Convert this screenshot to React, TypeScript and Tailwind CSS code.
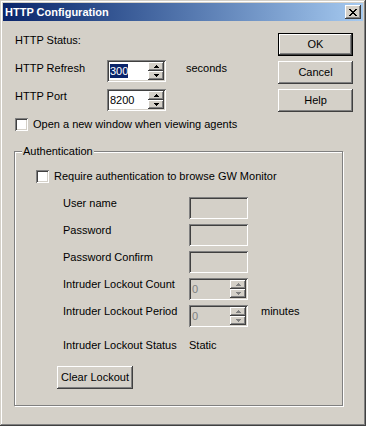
const raised =
  "shadow-[inset_-1px_-1px_0_#404040,inset_1px_1px_0_#ffffff,inset_-2px_-2px_0_#808080,inset_2px_2px_0_#d4d0c8]";
const sunken =
  "shadow-[inset_1px_1px_0_#808080,inset_-1px_-1px_0_#ffffff,inset_2px_2px_0_#404040,inset_-2px_-2px_0_#d4d0c8]";

function Arrow({ up, disabled }: { up?: boolean; disabled?: boolean }) {
  const c = disabled ? "#808080" : "#000000";
  return (
    <svg width="5" height="3" viewBox="0 0 5 3" shapeRendering="crispEdges">
      {up ? (
        <>
          <rect x="2" y="0" width="1" height="1" fill={c} />
          <rect x="1" y="1" width="3" height="1" fill={c} />
          <rect x="0" y="2" width="5" height="1" fill={c} />
        </>
      ) : (
        <>
          <rect x="0" y="0" width="5" height="1" fill={c} />
          <rect x="1" y="1" width="3" height="1" fill={c} />
          <rect x="2" y="2" width="1" height="1" fill={c} />
        </>
      )}
    </svg>
  );
}

function SpinBox({
  value,
  selected,
  disabled,
}: {
  value: string;
  selected?: boolean;
  disabled?: boolean;
}) {
  return (
    <div className={`flex h-[22px] w-[59px] p-[2px] ${sunken} ${disabled ? "bg-[#d4d0c8]" : "bg-white"}`}>
      <div className="flex-1 flex items-center pl-[1px]">
        {selected ? (
          <span className="bg-[#0a246a] text-white leading-[14px]">{value}</span>
        ) : (
          <span className={disabled ? "text-[#808080]" : "text-black"}>{value}</span>
        )}
      </div>
      <div className="flex flex-col w-[16px]">
        <div className={`h-[9px] bg-[#d4d0c8] flex items-center justify-center ${raised}`}>
          <Arrow up disabled={disabled} />
        </div>
        <div className={`h-[9px] bg-[#d4d0c8] flex items-center justify-center ${raised}`}>
          <Arrow disabled={disabled} />
        </div>
      </div>
    </div>
  );
}

function CheckBox() {
  return <div className={`w-[13px] h-[13px] bg-white shrink-0 ${sunken}`} />;
}

function Button({ label, isDefault, width = "w-[75px]" }: { label: string; isDefault?: boolean; width?: string }) {
  if (isDefault) {
    return (
      <div className={`${width} h-[23px] border border-black`}>
        <div className={`w-full h-full flex items-center justify-center ${raised}`}>{label}</div>
      </div>
    );
  }
  return <div className={`${width} h-[23px] flex items-center justify-center ${raised}`}>{label}</div>;
}

function FieldRow({ label, children, suffix }: { label: string; children: React.ReactNode; suffix?: string }) {
  return (
    <div className="flex items-start h-[22px]">
      <span className="w-[126px] leading-[13px]">{label}</span>
      {children}
      {suffix && <span className="ml-[13px] leading-[13px]">{suffix}</span>}
    </div>
  );
}

export default function App() {
  return (
    <div className="w-[366px] h-[426px] bg-[#d4d0c8] p-[3px] flex flex-col font-['Liberation_Sans',Arial,sans-serif] text-[11px] text-black shadow-[inset_-1px_-1px_0_#404040,inset_1px_1px_0_#d4d0c8,inset_-2px_-2px_0_#808080,inset_2px_2px_0_#ffffff]">
      {/* Title bar */}
      <div className="h-[18px] flex items-center justify-between pl-[2px] pr-[2px] bg-gradient-to-r from-[#0a246a] to-[#a6caf0]">
        <span className="text-white font-bold text-[11px] leading-[13px]">HTTP Configuration</span>
        <div className={`w-[16px] h-[14px] bg-[#d4d0c8] flex items-center justify-center ${raised}`}>
          <svg width="8" height="7" viewBox="0 0 8 7" shapeRendering="crispEdges">
            <path d="M0 0h2v1h1v1h2V1h1V0h2v1H7v1H6v1H5v1h1v1h1v1h1v1H6V6H5V5H3v1H2v1H0V6h1V5h1V4h1V3H2V2H1V1H0z" fill="#000" />
          </svg>
        </div>
      </div>

      {/* Top section */}
      <div className="flex justify-between">
        <div className="flex flex-col pl-[12px]">
          <span className="mt-[13px] leading-[13px]">HTTP Status:</span>
          <div className="flex items-start mt-[13px]">
            <span className="w-[92px] mt-[2px] leading-[13px]">HTTP Refresh</span>
            <SpinBox value="300" selected />
            <span className="ml-[20px] mt-[2px] leading-[13px]">seconds</span>
          </div>
          <div className="flex items-start mt-[7px]">
            <span className="w-[92px] mt-[1px] leading-[13px]">HTTP Port</span>
            <SpinBox value="8200" />
          </div>
          <div className="flex items-center mt-[7px]">
            <CheckBox />
            <span className="ml-[5px] leading-[13px]">Open a new window when viewing agents</span>
          </div>
        </div>
        <div className="flex flex-col gap-[5px] pr-[10px] mt-[12px]">
          <Button label="OK" isDefault />
          <Button label="Cancel" />
          <Button label="Help" />
        </div>
      </div>

      {/* Authentication group */}
      <div className="relative ml-[11px] mt-[20px] w-[329px] h-[255px] border border-[#808080] shadow-[inset_1px_1px_0_#ffffff,1px_1px_0_#ffffff]">
        <span className="absolute -top-[7px] left-[7px] px-[1px] bg-[#d4d0c8] leading-[13px]">Authentication</span>
        <div className="flex items-center mt-[18px] ml-[21px]">
          <CheckBox />
          <span className="ml-[5px] leading-[13px]">Require authentication to browse GW Monitor</span>
        </div>
        <div className="flex flex-col gap-[5px] mt-[14px] ml-[48px]">
          <FieldRow label="User name">
            <div className={`w-[59px] h-[22px] bg-[#d4d0c8] ${sunken}`} />
          </FieldRow>
          <FieldRow label="Password">
            <div className={`w-[59px] h-[22px] bg-[#d4d0c8] ${sunken}`} />
          </FieldRow>
          <FieldRow label="Password Confirm">
            <div className={`w-[59px] h-[22px] bg-[#d4d0c8] ${sunken}`} />
          </FieldRow>
          <FieldRow label="Intruder Lockout Count">
            <SpinBox value="0" disabled />
          </FieldRow>
          <FieldRow label="Intruder Lockout Period" suffix="minutes">
            <SpinBox value="0" disabled />
          </FieldRow>
        </div>
        <div className="flex mt-[12px] ml-[48px] leading-[13px]">
          <span className="w-[126px]">Intruder Lockout Status</span>
          <span>Static</span>
        </div>
        <div className="mt-[14px] ml-[42px]">
          <Button label="Clear Lockout" width="w-[76px]" />
        </div>
      </div>
    </div>
  );
}
